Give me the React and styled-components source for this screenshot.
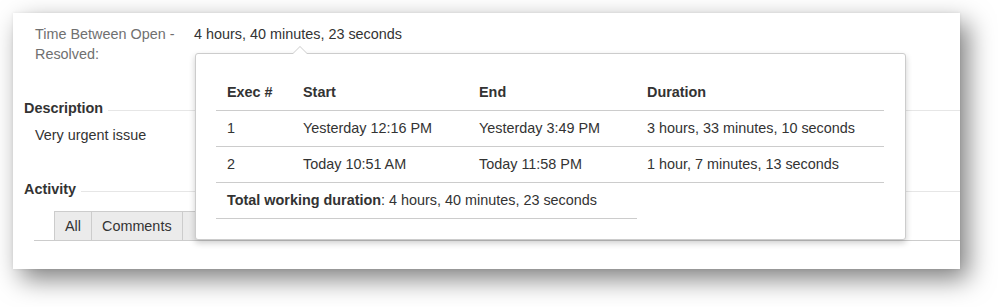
import React from 'react'
import styled, { createGlobalStyle } from 'styled-components'

const rows = [
	{ n: '1', start: 'Yesterday 12:16 PM', end: 'Yesterday 3:49 PM', dur: '3 hours, 33 minutes, 10 seconds' },
	{ n: '2', start: 'Today 10:51 AM', end: 'Today 11:58 PM', dur: '1 hour, 7 minutes, 13 seconds' },
]

const App = () => {
	return (
		<>
			<GlobalStyle />
			<Page>
				<Card>
					<Field>
						<Label>
							Time Between Open -
							<br />
							Resolved:
						</Label>
						<Value>4 hours, 40 minutes, 23 seconds</Value>
					</Field>

					<Heading>Description</Heading>
					<Body>Very urgent issue</Body>

					<Heading>Activity</Heading>
					<Tabs>
						<Tab>All</Tab>
						<Tab>Comments</Tab>
						<Tab $pad={16}>Work Log</Tab>
					</Tabs>

					<Popup>
						<Arrow />
						<Table>
							<thead>
								<tr>
									<Th $w={76}>Exec #</Th>
									<Th $w={176}>Start</Th>
									<Th $w={168}>End</Th>
									<Th $w={248}>Duration</Th>
								</tr>
							</thead>
							<tbody>
								{rows.map(r => (
									<tr key={r.n}>
										<Td>{r.n}</Td>
										<Td>{r.start}</Td>
										<Td>{r.end}</Td>
										<Td>{r.dur}</Td>
									</tr>
								))}
							</tbody>
						</Table>
						<Total>
							<b>Total working duration</b>: 4 hours, 40 minutes, 23 seconds
						</Total>
					</Popup>
				</Card>
			</Page>
		</>
	)
}

const GlobalStyle = createGlobalStyle`
body{
	margin: 0;
	background: #fff;
	font-family: "Liberation Sans", Arial, sans-serif;
	font-size: 14.4px;
	color: #333;
}
`

const Page = styled.div`
	padding: 13px 38px 38px 13px;
	width: 998px;
	height: 307px;
	box-sizing: border-box;
	overflow: hidden;
`

const Card = styled.div`
	position: relative;
	width: 947px;
	height: 256px;
	box-sizing: border-box;
	padding: 11px 0 0 11px;
	background: #fff;
	box-shadow: 8px 10px 24px rgba(0, 0, 0, 0.5), 0 0 3px rgba(0, 0, 0, 0.08);
`

const Field = styled.div`
	display: grid;
	grid-template-columns: 159px auto;
	padding-left: 11px;
	line-height: 20px;
`

const Label = styled.div`
	color: #707070;
`

const Value = styled.div`
	color: #333;
`

const Heading = styled.div`
	display: flex;
	align-items: center;
	margin-top: 34px;
	line-height: 20px;
	font-weight: bold;
	color: #333;
	&::after {
		content: '';
		flex: 1;
		height: 1px;
		margin: 4px 0 0 5px;
		background: #e6e6e6;
	}
`

const Body = styled.div`
	margin-top: 7px;
	padding-left: 11px;
	line-height: 20px;
`

const Tabs = styled.div`
	display: flex;
	margin: 12px 0 0 10px;
	padding-left: 20px;
	border-bottom: 1px solid #ccc;
	height: 29px;
`

const Tab = styled.div`
	display: flex;
	align-items: center;
	padding: 0 10px 0 ${p => p.$pad || 10}px;
	background: #ebebeb;
	border: 1px solid #ccc;
	border-bottom: none;
	margin-right: -1px;
	color: #333;
`

const Popup = styled.div`
	position: absolute;
	left: 182px;
	top: 40px;
	width: 711px;
	height: 187px;
	box-sizing: border-box;
	padding: 20px 20px 0 20px;
	background: #fff;
	border: 1px solid #ccc;
	border-radius: 3px;
	box-shadow: 0 3px 6px rgba(0, 0, 0, 0.2);
`

const Arrow = styled.div`
	position: absolute;
	left: 96px;
	top: -8px;
	width: 0;
	height: 0;
	border-left: 8px solid transparent;
	border-right: 8px solid transparent;
	border-bottom: 8px solid #ccc;
	&::after {
		content: '';
		position: absolute;
		left: -7px;
		top: 1px;
		border-left: 7px solid transparent;
		border-right: 7px solid transparent;
		border-bottom: 7px solid #fff;
	}
`

const Table = styled.table`
	width: 668px;
	table-layout: fixed;
	border-collapse: collapse;
	color: #333;
`

const Th = styled.th`
	box-sizing: border-box;
	width: ${p => p.$w}px;
	height: 36px;
	padding: 0 0 0 11px;
	text-align: left;
	font-weight: bold;
	border-bottom: 1px solid #ccc;
	white-space: nowrap;
`

const Td = styled.td`
	height: 35px;
	padding: 0 0 0 11px;
	border-bottom: 1px solid #ccc;
	white-space: nowrap;
`

const Total = styled.div`
	width: 421px;
	height: 36px;
	box-sizing: border-box;
	display: flex;
	align-items: center;
	padding-left: 11px;
	border-bottom: 1px solid #ccc;
	white-space: pre;
	& b {
		font-weight: bold;
	}
`

export default App
